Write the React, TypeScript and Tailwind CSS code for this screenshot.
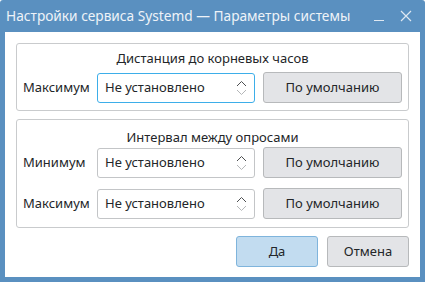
import type { ReactNode } from "react";

function SpinBox({ focused = false }: { focused?: boolean }) {
  return (
    <div
      className={
        "flex h-[30px] w-[158px] items-center justify-between rounded-[3px] border bg-white pl-[7px] pr-[7px] " +
        (focused ? "border-[#3daee9]" : "border-[#c3c5c7]")
      }
    >
      <span className="text-[13px] text-[#232629]">Не установлено</span>
      <svg width="11" height="18" viewBox="0 0 11 18" className="shrink-0">
        <path d="M1 7 L5.5 2.5 L10 7" fill="none" stroke="#4d4f51" strokeWidth="1" />
        <path d="M1 11 L5.5 15.5 L10 11" fill="none" stroke="#b4b6b8" strokeWidth="1" />
      </svg>
    </div>
  );
}

function Button({ children, className = "" }: { children: ReactNode; className?: string }) {
  return (
    <button
      className={
        "flex h-[31px] items-center justify-center rounded-[3px] border text-[13px] text-[#232629] " + className
      }
    >
      {children}
    </button>
  );
}

function Row({ label, focused }: { label: string; focused?: boolean }) {
  return (
    <div className="flex items-center">
      <span className="w-[74px] text-[13px] text-[#232629]">{label}</span>
      <SpinBox focused={focused} />
      <Button className="ml-[8px] w-[139px] border-[#b7b9bb] bg-[#e3e4e7]">По умолчанию</Button>
    </div>
  );
}

export default function App() {
  return (
    <div className="h-[284px] w-[425px] bg-white" style={{ fontFamily: '"Noto Sans", sans-serif' }}>
      <div className="flex h-[282px] flex-col rounded-t-[3px] bg-[#5a90c0] px-[5px] pb-[5px]">
        <div className="flex h-[32px] items-center justify-between pl-[1px] pr-[8px]">
          <span className="text-[13.7px] text-[#eef3f8]">Настройки сервиса Systemd — Параметры системы</span>
          <div className="flex items-center gap-[15px]">
            <svg width="12" height="12" viewBox="0 0 12 12">
              <path d="M1 10.5 H11" stroke="#dfe8f1" strokeWidth="1" />
            </svg>
            <svg width="12" height="12" viewBox="0 0 12 12">
              <path d="M1 1 L11 11 M11 1 L1 11" stroke="#dfe8f1" strokeWidth="1.2" />
            </svg>
          </div>
        </div>
        <div className="flex flex-1 flex-col bg-white px-[11px] pt-[11px]">
          <div className="flex h-[68px] flex-col rounded-[3px] border border-[#c9cbcd] px-[6px]">
            <div className="mt-[5px] text-center text-[13px] leading-[18px] text-[#232629]">
              Дистанция до корневых часов
            </div>
            <div className="mt-[5px]">
              <Row label="Максимум" focused />
            </div>
          </div>
          <div className="mt-[8px] flex h-[109px] flex-col rounded-[3px] border border-[#c9cbcd] px-[6px]">
            <div className="mt-[8px] text-center text-[13px] leading-[18px] text-[#232629]">
              Интервал между опросами
            </div>
            <div className="mt-[1px] flex flex-col gap-[10px]">
              <Row label="Минимум" />
              <Row label="Максимум" />
            </div>
          </div>
          <div className="mt-[8px] flex justify-end gap-[9px]">
            <Button className="w-[82px] border-[#7fb4dc] bg-[#c2dcf0]">Да</Button>
            <Button className="w-[82px] border-[#b7b9bb] bg-[#e3e4e7]">Отмена</Button>
          </div>
        </div>
      </div>
    </div>
  );
}
